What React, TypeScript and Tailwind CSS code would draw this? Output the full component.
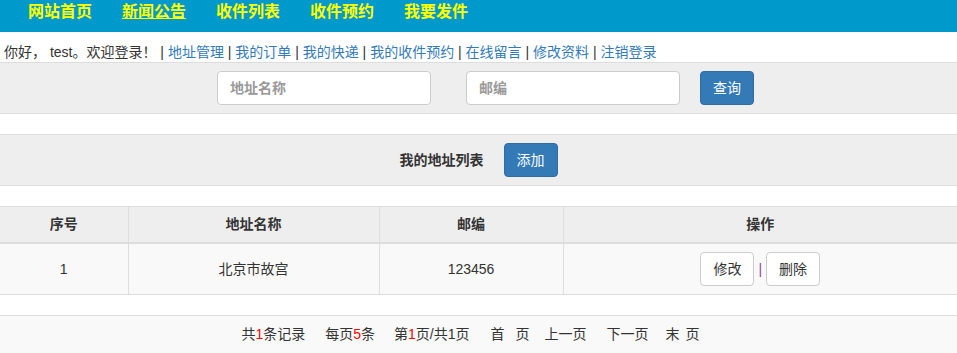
import React from "react"

const font = { fontFamily: '"Liberation Sans", "Noto Sans CJK SC", sans-serif' }

const navItems = ["网站首页", "新闻公告", "收件列表", "收件预约", "我要发件"]
const userLinks = ["地址管理", "我的订单", "我的快递", "我的收件预约", "在线留言", "修改资料", "注销登录"]

function Red({ children }: { children: React.ReactNode }) {
  return <span className="text-[#ff0000]">{children}</span>
}

export default function App() {
  return (
    <div className="w-[957px] h-[353px] overflow-hidden bg-white text-[14px] text-[#333]" style={font}>
      {/* top nav */}
      <div className="h-8 bg-[#0099cc] flex items-start pl-[28px] gap-[30px]">
        {navItems.map((item, i) => (
          <a
            key={item}
            className={`text-[16px] leading-[24px] font-bold text-[#ffff00] ${i === 1 ? "underline" : ""}`}
          >
            {item}
          </a>
        ))}
      </div>

      {/* user line */}
      <div className="h-[30px] pt-[10px] pl-[4px] leading-[20px] whitespace-pre">
        <span>你好， test。欢迎登录！</span>
        {userLinks.map((link) => (
          <span key={link}>
            <span> | </span>
            <a className="text-[#337ab7]">{link}</a>
          </span>
        ))}
      </div>

      {/* search */}
      <div className="bg-[#eeeeee] border-y border-[#dddddd] py-2 flex justify-center pl-[14px]">
        <input
          placeholder="地址名称"
          className="w-[214px] h-[34px] px-3 bg-white border border-[#cccccc] rounded-[4px] placeholder:text-[#999] placeholder:font-bold outline-none"
        />
        <input
          placeholder="邮编"
          className="ml-[35px] w-[214px] h-[34px] px-3 bg-white border border-[#cccccc] rounded-[4px] placeholder:text-[#999] placeholder:font-bold outline-none"
        />
        <button className="ml-[20px] h-[34px] px-3 bg-[#337ab7] border border-[#2e6da4] rounded-[4px] text-white">
          查询
        </button>
      </div>

      {/* list header */}
      <div className="mt-5 bg-[#eeeeee] border-y border-[#dddddd] py-2 flex justify-center items-center gap-5">
        <span className="font-bold">我的地址列表</span>
        <button className="h-[34px] px-3 bg-[#337ab7] border border-[#2e6da4] rounded-[4px] text-white">
          添加
        </button>
      </div>

      {/* table */}
      <table className="mt-5 w-full border-collapse table-fixed text-center">
        <colgroup>
          <col className="w-[128px]" />
          <col className="w-[251px]" />
          <col className="w-[184px]" />
          <col />
        </colgroup>
        <thead>
          <tr className="bg-[#eeeeee] border-t border-[#dddddd]">
            <th className="border-r border-b-2 border-[#dddddd] py-2 leading-[19px]">序号</th>
            <th className="border-x border-b-2 border-[#dddddd] py-2 leading-[19px]">地址名称</th>
            <th className="border-x border-b-2 border-[#dddddd] py-2 leading-[19px]">邮编</th>
            <th className="border-l border-b-2 border-[#dddddd] py-2 leading-[19px]">操作</th>
          </tr>
        </thead>
        <tbody>
          <tr className="bg-[#f9f9f9] border-b border-[#dddddd]">
            <td className="border-r border-[#dddddd]">1</td>
            <td className="border-x border-[#dddddd]">北京市故宫</td>
            <td className="border-x border-[#dddddd]">123456</td>
            <td className="border-l border-[#dddddd] py-2">
              <div className="flex justify-center items-center">
                <button className="h-[34px] px-3 bg-white border border-[#cccccc] rounded-[4px]">修改</button>
                <span className="mx-[4px] text-[#8a4a9a]">|</span>
                <button className="h-[34px] px-3 bg-white border border-[#cccccc] rounded-[4px]">删除</button>
              </div>
            </td>
          </tr>
        </tbody>
      </table>

      {/* pagination */}
      <div className="mt-5 bg-[#f9f9f9] border-t border-[#dddddd] pt-[8px] pb-3 leading-[20px] flex justify-center pr-[16px] whitespace-pre">
        <span>
          共<Red>1</Red>条记录
        </span>
        <span className="ml-[20px]">
          每页<Red>5</Red>条
        </span>
        <span className="ml-[19px]">
          第<Red>1</Red>页/共1页
        </span>
        <span className="ml-[21px]">首</span>
        <span className="ml-[11px]">页</span>
        <span className="ml-[15px]">上一页</span>
        <span className="ml-[20px]">下一页</span>
        <span className="ml-[17px]">末</span>
        <span className="ml-[6px]">页</span>
      </div>
    </div>
  )
}
